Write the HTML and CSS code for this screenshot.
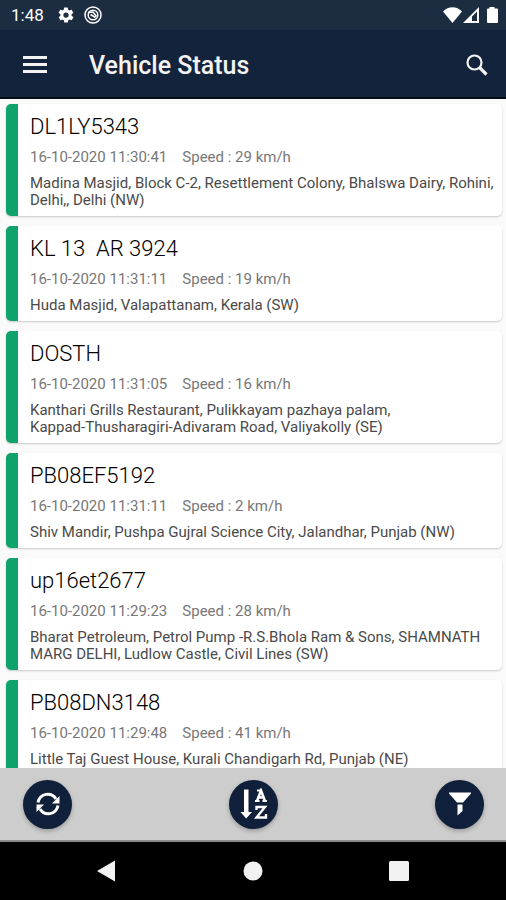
FILE: index.html
```html
<!DOCTYPE html>
<html lang="en">
<head>
<meta charset="utf-8">
<meta name="viewport" content="width=device-width, initial-scale=1">
<title>Vehicle Status</title>
<link rel="stylesheet" href="styles.css">
</head>
<body>
<div class="status">
  <span class="time">1:48</span>
  <svg class="gear" width="18" height="18" viewBox="0 0 24 24" aria-hidden="true"><path fill="#fff" d="M19.4 13c0-.3.1-.6.1-1s0-.7-.1-1l2.100-1.600c.2-.2.2-.4.1-.6l-2-3.500c-.1-.2-.4-.3-.6-.2l-2.500 1c-.5-.4-1.100-.7-1.700-1l-.4-2.600c0-.3-.2-.5-.5-.5h-4c-.3 0-.5.200-.5.500l-.4 2.600c-.6.3-1.200.6-1.700 1l-2.500-1c-.2-.1-.5 0-.6.2l-2 3.500c-.1.2-.1.5.1.6L4.600 11c0 .3-.1.700-.1 1s0 .7.1 1l-2.100 1.600c-.2.2-.2.400-.1.600l2 3.500c.1.2.4.3.6.2l2.500-1c.5.4 1.100.7 1.700 1l.4 2.600c0 .3.200.5.500.5h4c.3 0 .5-.2.5-.5l.4-2.600c.6-.3 1.200-.6 1.700-1l2.500 1c.2.1.5 0 .6-.2l2-3.500c.1-.2.1-.5-.1-.6L19.400 13zM12 15.500a3.500 3.500 0 1 1 0-7 3.500 3.500 0 0 1 0 7z"/></svg>
  <svg class="app" width="18" height="18" viewBox="0 0 18 18" fill="none" stroke="#fff" aria-hidden="true"><circle cx="9" cy="9" r="8" stroke-width="1.500"/><circle cx="9" cy="9" r="4.800" stroke-width="1.500"/><path d="M4 6.500 9 6l3.500 4.500M6.500 8.500l5 3" stroke-width="1.600"/></svg>
  <span class="fill"></span>
  <svg width="56" height="18" viewBox="0 0 56 18" fill="#fff" aria-hidden="true"><path d="M0 5.500C5-.3 14-.3 19 5.500L9.500 17z"/><path fill-rule="evenodd" d="M20 17 36 1v16zM29 15V10.500L34 5.500V15z"/><path d="M46.500 1h5v1.500H54a1 1 0 0 1 1 1V16a1 1 0 0 1-1 1h-9a1 1 0 0 1-1-1V3.500a1 1 0 0 1 1-1h1.500z"/></svg>
</div>
<header class="appbar">
  <button class="icon" aria-label="Menu"><svg width="24" height="18" viewBox="0 0 24 18" fill="#f3f3f3"><path d="M0 0h24v3H0zM0 7h24v3H0zM0 14h24v3H0z"/></svg></button>
  <h1>Vehicle Status</h1>
  <button class="icon" aria-label="Search"><svg width="22" height="22" viewBox="0 0 22 22" fill="none" stroke="#f3f3f3"><circle cx="8.500" cy="8.500" r="7" stroke-width="2.200"/><path d="m13.500 13.500 7 7" stroke-width="3.200"/></svg></button>
</header>
<main class="list">
  <article class="card"><h2>DL1LY5343</h2><p class="meta"><span>16-10-2020 11:30:41</span><span>Speed : 29 km/h</span></p><p class="addr">Madina Masjid, Block C-2, Resettlement Colony, Bhalswa Dairy, Rohini, Delhi,, Delhi (NW)</p></article>
  <article class="card"><h2>KL 13&nbsp; AR 3924</h2><p class="meta"><span>16-10-2020 11:31:11</span><span>Speed : 19 km/h</span></p><p class="addr">Huda Masjid, Valapattanam, Kerala (SW)</p></article>
  <article class="card"><h2>DOSTH</h2><p class="meta"><span>16-10-2020 11:31:05</span><span>Speed : 16 km/h</span></p><p class="addr">Kanthari Grills Restaurant, Pulikkayam pazhaya palam,<br>Kappad-Thusharagiri-Adivaram Road, Valiyakolly (SE)</p></article>
  <article class="card"><h2>PB08EF5192</h2><p class="meta"><span>16-10-2020 11:31:11</span><span>Speed : 2 km/h</span></p><p class="addr">Shiv Mandir, Pushpa Gujral Science City, Jalandhar, Punjab (NW)</p></article>
  <article class="card"><h2>up16et2677</h2><p class="meta"><span>16-10-2020 11:29:23</span><span>Speed : 28 km/h</span></p><p class="addr">Bharat Petroleum, Petrol Pump -R.S.Bhola Ram &amp; Sons, SHAMNATH MARG DELHI, Ludlow Castle, Civil Lines (SW)</p></article>
  <article class="card"><h2>PB08DN3148</h2><p class="meta"><span>16-10-2020 11:29:48</span><span>Speed : 41 km/h</span></p><p class="addr">Little Taj Guest House, Kurali Chandigarh Rd, Punjab (NE)</p></article>
</main>
<div class="actions">
  <button class="round" aria-label="Refresh"><svg width="24" height="24" viewBox="0 0 24 24" fill="none" stroke="#fff" stroke-width="3"><path d="M2 10.500C4 1 15.500-.5 20 7"/><path d="M22 13.500C20 23 8.500 24.500 4 17"/><path d="M23.500 4v7.500H16zM.5 20v-7.500H8z" fill="#fff" stroke="none"/></svg></button>
  <button class="round" aria-label="Sort A to Z"><svg width="28" height="32" viewBox="0 0 28 32" fill="none" stroke="#fff"><path d="M4 1.500h4.500V24H12l-5.800 6.500L.5 24H4z" fill="#fff" stroke="none"/><path d="m17 13 4-10.500L25 13M18 9.500h6" stroke-width="2.500"/><path d="M17 2.500h4M15 13h4.500M22.500 13H27" stroke-width="2"/><path d="M16.500 22v-3H25l-8.500 10.500H26v-3.500" stroke-width="2.400"/></svg></button>
  <button class="round" aria-label="Filter"><svg width="22" height="24" viewBox="0 0 22 24" fill="#fff"><path d="M0 .5h22v1L14 10.500H8L0 1.500zM8.500 12.500h5V19l-5 4.500z"/></svg></button>
</div>
<nav class="sysnav">
  <button aria-label="Back"><svg width="20" height="22" viewBox="0 0 20 22"><path fill="#f2f2f2" d="M18 .5v21L0 11z"/></svg></button>
  <button aria-label="Home"><svg width="20" height="20" viewBox="0 0 20 20"><circle cx="10" cy="10" r="9.500" fill="#f2f2f2"/></svg></button>
  <button aria-label="Recent apps"><svg width="20" height="20" viewBox="0 0 20 20"><rect width="20" height="20" rx="1.500" fill="#f2f2f2"/></svg></button>
</nav>
</body>
</html>
```
FILE: styles.css
```css
* { box-sizing: border-box; margin: 0; padding: 0; }
body {
  height: 100vh;
  display: flex;
  flex-direction: column;
  overflow: hidden;
  background: #fafafa;
  font-family: Roboto, "Liberation Sans", sans-serif;
}
button { border: 0; background: none; display: grid; place-items: center; cursor: pointer; }
svg { display: block; }
.status {
  flex: none;
  height: 30px;
  padding: 0 7px 0 11px;
  display: flex;
  align-items: center;
  background: #1c2d42;
  color: #fff;
}
.time { font-size: 17px; }
.gear { margin-left: 13px; }
.app { margin-left: 9px; }
.fill { flex: 1; }
.appbar {
  flex: none;
  height: 69px;
  padding: 2px 11px 0 17px;
  display: flex;
  align-items: center;
  background: #14233c;
  border-bottom: 2px solid #060b18;
  color: #f3f3f3;
}
.icon { width: 36px; height: 36px; }
.appbar h1 { flex: 1; margin-left: 36px; padding-top: 2px; font-size: 25px; font-weight: 500; }
.list {
  flex: 1;
  min-height: 0;
  overflow: hidden;
  padding: 5px 4px 0 6px;
  display: flex;
  flex-direction: column;
  gap: 10px;
}
.card {
  flex: none;
  padding: 9px 6px 7px 12px;
  border-left: 12px solid #0fa36b;
  border-radius: 5px;
  background: #fff;
  box-shadow: 0 1px 2px rgba(0, 0, 0, .2);
}
.card h2 { font-size: 22px; line-height: 28px; font-weight: 300; color: #000; }
.meta { display: flex; gap: 15px; margin-top: 6px; font-size: 15px; line-height: 20px; color: #777; }
.addr { margin-top: 8px; font-size: 15px; line-height: 17px; color: #4a4a4a; }
.actions {
  flex: none;
  height: 74px;
  padding: 0 22px 0 23px;
  display: flex;
  align-items: center;
  justify-content: space-between;
  background: #cdcdcd;
  border-bottom: 2px solid #8d8d8d;
}
.round { width: 49px; height: 49px; border-radius: 50%; background: #11203a; box-shadow: 0 2px 4px rgba(0, 0, 0, .25); }
.sysnav {
  flex: none;
  height: 58px;
  padding: 0 34px;
  display: flex;
  background: #000;
}
.sysnav button { flex: 1; }
```
